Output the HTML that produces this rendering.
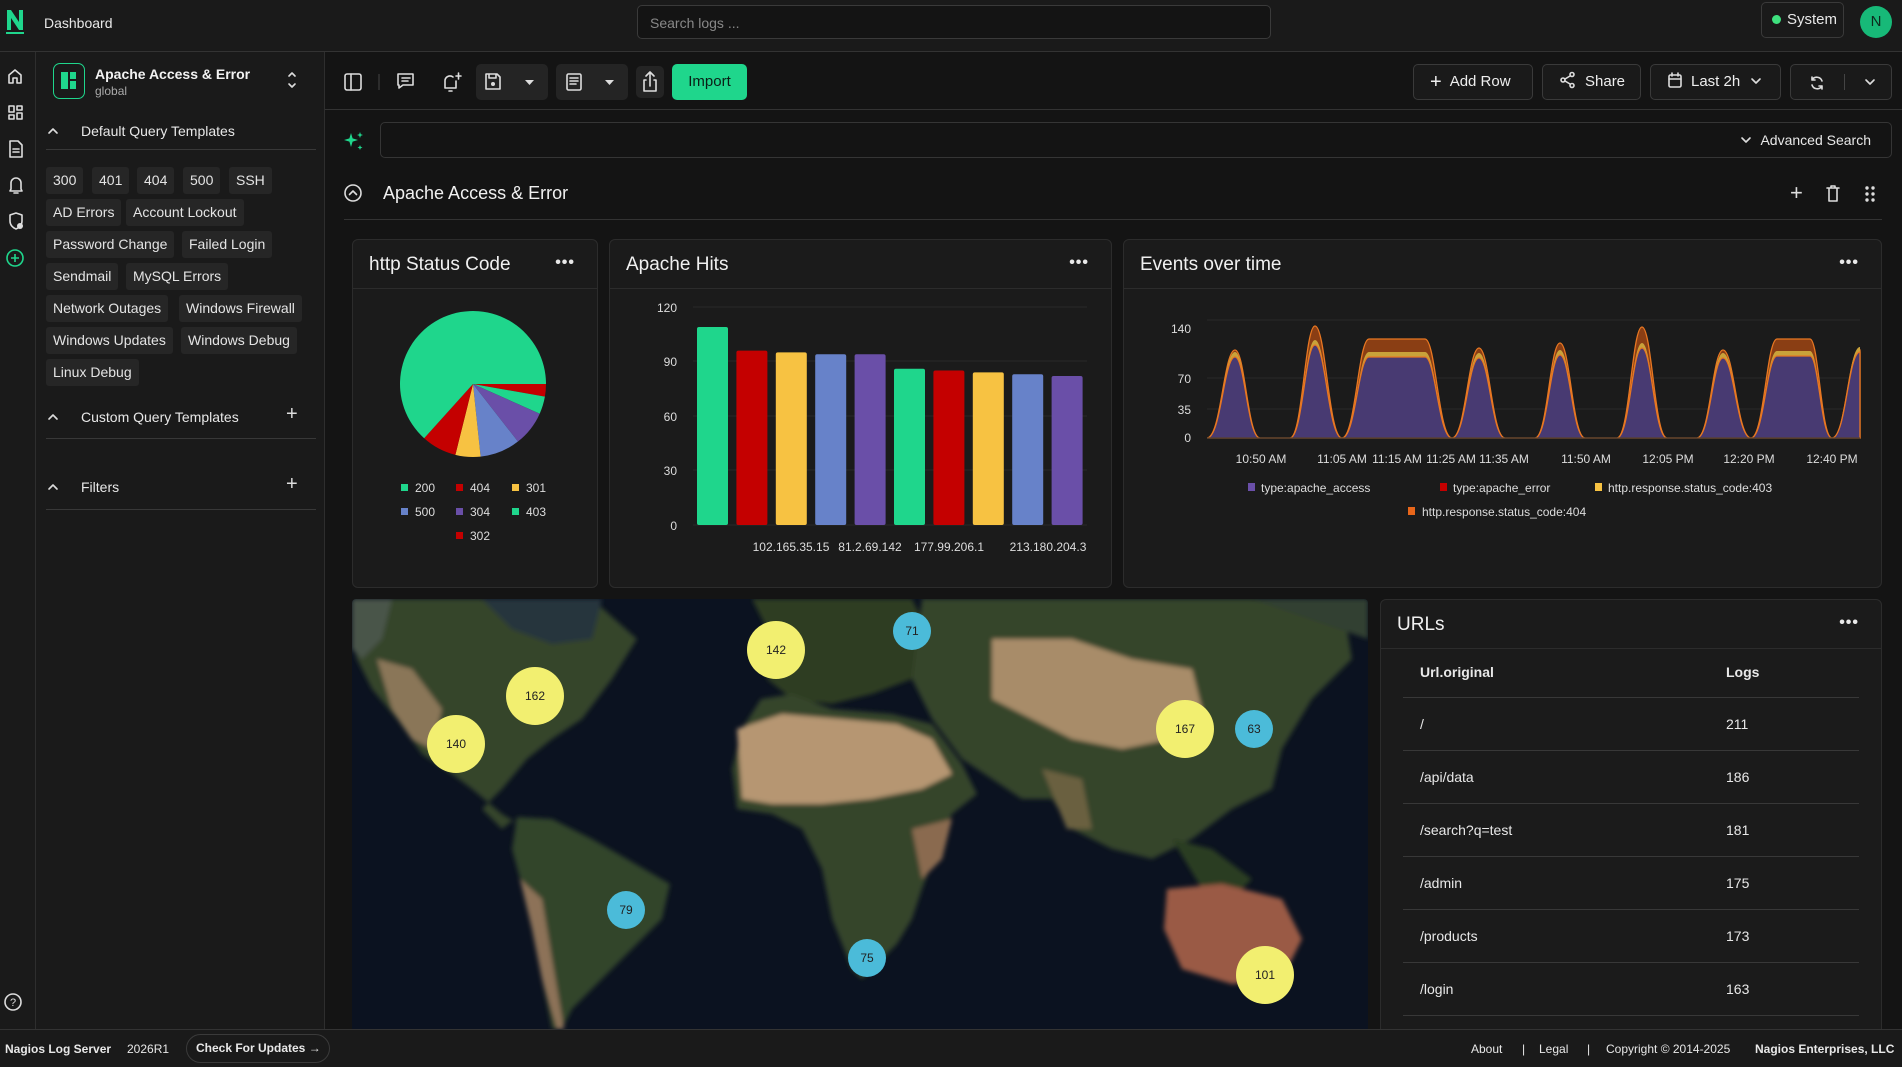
<!DOCTYPE html>
<html><head><meta charset="utf-8">
<style>
*{box-sizing:border-box;margin:0;padding:0}
html,body{width:1902px;height:1067px;overflow:hidden}
body{background:#141414;font-family:"Liberation Sans",sans-serif;color:#e8e8e8;position:relative}
.a{position:absolute}
.top{left:0;top:0;width:1902px;height:52px;background:#1a1a1a;border-bottom:1px solid #333}
.rail{left:0;top:52px;width:36px;height:977px;background:#1a1a1a;border-right:1px solid #2e2e2e}
.side{left:36px;top:52px;width:289px;height:977px;background:#1a1a1a;border-right:1px solid #2e2e2e}
.chip{position:absolute;height:27px;background:#262626;border-radius:3px;font-size:14px;line-height:27px;padding:0 7px;color:#e4e4e4;white-space:nowrap}
.panel{position:absolute;background:#1b1b1b;border:1px solid #2c2c2c;border-radius:6px;overflow:hidden}
.ph{position:absolute;left:0;top:0;right:0;height:49px;border-bottom:1px solid #2c2c2c}
.pt{position:absolute;left:16px;top:14px;font-size:19px;color:#f0f0f0}
.dots{position:absolute;right:22px;top:14px;font-size:16px;letter-spacing:1px;font-weight:bold}
.btn{position:absolute;top:64px;height:36px;border:1px solid #3a3a3a;border-radius:5px;background:#1a1a1a;font-size:15px;line-height:34px;color:#eee}
.foot{left:0;top:1029px;width:1902px;height:38px;background:#1a1a1a;border-top:1px solid #333;font-size:12px}
.sv{stroke:#ddd;fill:none;stroke-width:1.6;stroke-linecap:round;stroke-linejoin:round}
.lbl{font-size:12px;fill:#ddd;font-family:"Liberation Sans",sans-serif}
.hl{position:absolute;height:1px;background:#383838}
</style></head><body>
<div class="a top">
 <svg class="a" style="left:4px;top:6px" width="22" height="30" viewBox="0 0 22 30"><path d="M3 24V4h4l8 12V4h4v20h-4L7 12v12z" fill="#1fd68c"/><rect x="2" y="26" width="18" height="2" fill="#1fd68c"/></svg>
 <div class="a" style="left:44px;top:15px;font-size:14px">Dashboard</div>
 <div class="a" style="left:637px;top:5px;width:634px;height:34px;border:1px solid #3a3a3a;border-radius:5px;background:#141414;font-size:14px;color:#888;padding:9px 12px">Search logs ...</div>
 <div class="a" style="left:1761px;top:2px;width:83px;height:36px;border:1px solid #3a3a3a;border-radius:5px;font-size:15px;line-height:34px;padding-left:10px"><span style="display:inline-block;width:9px;height:9px;border-radius:50%;background:#3ee07e;margin-right:6px"></span>System</div>
 <div class="a" style="left:1860px;top:6px;width:32px;height:32px;border-radius:50%;background:#17b978;color:#0d2a1d;text-align:center;line-height:32px;font-size:15px">N</div>
</div>
<div class="a rail">
 <svg class="a" style="left:3px;top:14px" width="26" height="220" viewBox="0 0 26 220">
  <path class="sv" d="M6 17V9l6-5 6 5v8h-4v-5h-4v5z"/>
  <g transform="translate(0,36)"><rect class="sv" x="6" y="4" width="5" height="6"/><rect class="sv" x="14" y="4" width="5" height="4"/><rect class="sv" x="6" y="13" width="5" height="4"/><rect class="sv" x="14" y="11" width="5" height="6"/></g>
  <g transform="translate(0,72)"><path class="sv" d="M7 3h8l4 4v12H7z M10 11h6 M10 14h6"/></g>
  <g transform="translate(0,108)"><path class="sv" d="M8 15V9a5 5 0 0 1 10 0v6l1 2H7z M11 19h4"/></g>
  <g transform="translate(0,144)"><path class="sv" d="M13 3l6 2v6c0 4-3 7-6 8-3-1-6-4-6-8V5z"/><circle cx="17" cy="16" r="3" fill="#ddd"/></g>
  <g transform="translate(0,180)"><circle cx="12" cy="12" r="8" stroke="#1fd68c" stroke-width="1.6" fill="none"/><path d="M12 8v8M8 12h8" stroke="#1fd68c" stroke-width="1.6"/></g>
 </svg>
 <svg class="a" style="left:3px;top:938px" width="26" height="26"><circle cx="10" cy="12" r="8" class="sv"/><text x="10" y="16" text-anchor="middle" font-size="11" fill="#ddd">?</text></svg>
</div>
<div class="a side">
 <div class="a" style="left:17px;top:11px;width:32px;height:36px;border:1.5px solid #1fd68c;border-radius:7px"><div class="a" style="left:7px;top:8px;width:7px;height:17px;background:#1fd68c"></div><div class="a" style="left:16px;top:8px;width:6px;height:7px;background:#1fd68c"></div><div class="a" style="left:16px;top:17px;width:6px;height:8px;background:#1fd68c"></div></div>
 <div class="a" style="left:59px;top:14px;font-size:14px;font-weight:bold;color:#f2f2f2">Apache Access &amp; Error</div>
 <div class="a" style="left:59px;top:32px;font-size:12px;color:#aaa">global</div>
 <svg class="a" style="left:250px;top:18px" width="12" height="20"><path class="sv" d="M3 6l3-3 3 3 M3 14l3 3 3-3"/></svg>
 <svg class="a" style="left:10px;top:73px" width="14" height="12"><path class="sv" d="M3 8l4-4 4 4"/></svg>
 <div class="a" style="left:45px;top:71px;font-size:14px">Default Query Templates</div>
 <div class="hl" style="left:10px;top:97px;width:270px"></div>
 <div class="chip" style="left:10px;top:115px">300</div><div class="chip" style="left:56px;top:115px">401</div><div class="chip" style="left:101px;top:115px">404</div><div class="chip" style="left:147px;top:115px">500</div><div class="chip" style="left:193px;top:115px">SSH</div>
 <div class="chip" style="left:10px;top:147px">AD Errors</div><div class="chip" style="left:90px;top:147px">Account Lockout</div>
 <div class="chip" style="left:10px;top:179px">Password Change</div><div class="chip" style="left:146px;top:179px">Failed Login</div>
 <div class="chip" style="left:10px;top:211px">Sendmail</div><div class="chip" style="left:90px;top:211px">MySQL Errors</div>
 <div class="chip" style="left:10px;top:243px">Network Outages</div><div class="chip" style="left:143px;top:243px">Windows Firewall</div>
 <div class="chip" style="left:10px;top:275px">Windows Updates</div><div class="chip" style="left:145px;top:275px">Windows Debug</div>
 <div class="chip" style="left:10px;top:307px">Linux Debug</div>
 <svg class="a" style="left:10px;top:359px" width="14" height="12"><path class="sv" d="M3 8l4-4 4 4"/></svg>
 <div class="a" style="left:45px;top:357px;font-size:14px">Custom Query Templates</div>
 <div class="a" style="left:250px;top:351px;font-size:20px;color:#ddd">+</div>
 <div class="hl" style="left:10px;top:386px;width:270px"></div>
 <svg class="a" style="left:10px;top:429px" width="14" height="12"><path class="sv" d="M3 8l4-4 4 4"/></svg>
 <div class="a" style="left:45px;top:427px;font-size:14px">Filters</div>
 <div class="a" style="left:250px;top:421px;font-size:20px;color:#ddd">+</div>
 <div class="hl" style="left:10px;top:457px;width:270px"></div>
</div>
<div class="a" style="left:325px;top:52px;width:1577px;height:58px;border-bottom:1px solid #333"></div>
<svg class="a" style="left:340px;top:64px" width="330" height="36" viewBox="340 64 330 36">
 <rect x="345" y="74" width="16" height="16" rx="2" class="sv"/><path class="sv" d="M351 74v16"/>
 <path d="M379 74v16" stroke="#444"/>
 <path class="sv" d="M398 74h15v11h-10l-4 3v-3h-1z M402 78h8 M402 81h6"/>
 <path class="sv" d="M445 88v-7a5 5 0 0 1 8-4 M445 88h11 M449 91h3 M456 76h5 M458.5 73v6 M456 81v7"/>
 <rect x="476" y="64" width="72" height="36" rx="5" fill="#242424"/>
 <path class="sv" d="M486 74h11l3 3v12h-14z M489 74v4h7v-4"/><circle cx="493" cy="84" r="2" fill="#ddd"/>
 <path d="M525 80h9l-4.5 5z" fill="#ddd"/>
 <rect x="556" y="64" width="72" height="36" rx="5" fill="#242424"/>
 <rect x="567" y="74" width="14" height="16" rx="1.5" class="sv"/><path class="sv" d="M570 78h8 M570 81h8 M570 84h6"/>
 <path d="M605 80h9l-4.5 5z" fill="#ddd"/>
 <rect x="636" y="66" width="28" height="32" rx="5" fill="#242424"/>
 <path class="sv" d="M646 80h-2v11h12V80h-2 M650 86V72 M646 76l4-4 4 4"/>
</svg>
<div class="a" style="left:672px;top:64px;width:75px;height:36px;background:#1fd68c;border-radius:5px;color:#0b1f16;font-size:15px;text-align:center;line-height:36px">Import</div>
<div class="btn" style="left:1413px;width:120px;padding-left:16px"><span style="font-size:20px;vertical-align:-2px;margin-right:8px">+</span>Add Row</div>
<div class="btn" style="left:1542px;width:99px;padding-left:16px"><svg width="18" height="18" style="vertical-align:-3px;margin-right:8px"><circle cx="13" cy="3.5" r="2" class="sv"/><circle cx="4" cy="9" r="2" class="sv"/><circle cx="13" cy="14.5" r="2" class="sv"/><path class="sv" d="M6 8l5-3 M6 10l5 3"/></svg>Share</div>
<div class="btn" style="left:1650px;width:131px;padding-left:16px"><svg width="16" height="16" style="vertical-align:-2px;margin-right:8px"><rect x="2" y="3" width="12" height="12" rx="1.5" class="sv"/><path class="sv" d="M2 7h12 M5 1v3 M11 1v3"/></svg>Last 2h <svg width="12" height="10" style="margin-left:6px"><path class="sv" d="M2 3l4 4 4-4"/></svg></div>
<div class="btn" style="left:1790px;width:102px"><svg class="a" style="left:17px;top:9px" width="18" height="18"><path class="sv" d="M14 7a5.5 5.5 0 0 0-10-1 M4 11a5.5 5.5 0 0 0 10 1 M4 3v3h3 M14 15v-3h-3"/></svg><div class="a" style="left:53px;top:9px;width:1px;height:16px;background:#444"></div><svg class="a" style="left:72px;top:12px" width="14" height="10"><path class="sv" d="M3 3l4 4 4-4"/></svg></div>
<svg class="a" style="left:342px;top:130px" width="24" height="24"><path d="M9 3l1.6 5.4L16 10l-5.4 1.6L9 17l-1.6-5.4L2 10l5.4-1.6z" fill="#1fd68c"/><path d="M18 2l.8 2.2L21 5l-2.2.8L18 8l-.8-2.2L15 5l2.2-.8z" fill="#1fd68c"/><path d="M18 15l.7 1.8 1.8.7-1.8.7L18 20l-.7-1.8-1.8-.7 1.8-.7z" fill="#1fd68c"/></svg>
<div class="a" style="left:380px;top:122px;width:1512px;height:36px;border:1px solid #353535;border-radius:5px;background:#141414"><div class="a" style="right:20px;top:9px;font-size:14px"><svg width="12" height="10" style="margin-right:8px"><path class="sv" d="M2 3l4 4 4-4"/></svg>Advanced Search</div></div>
<svg class="a" style="left:343px;top:183px" width="20" height="20"><circle cx="10" cy="10" r="8" class="sv"/><path class="sv" d="M6.5 11.5L10 8l3.5 3.5"/></svg>
<div class="a" style="left:383px;top:183px;font-size:18px;color:#f0f0f0">Apache Access &amp; Error</div>
<div class="a" style="left:1790px;top:180px;font-size:22px;color:#ddd">+</div>
<svg class="a" style="left:1825px;top:185px" width="16" height="18"><path class="sv" d="M2 3h12 M6 3V1h4v2 M4 3v13h8V3"/></svg>
<svg class="a" style="left:1863px;top:185px" width="14" height="18" fill="#ddd"><circle cx="4" cy="3" r="1.7"/><circle cx="10" cy="3" r="1.7"/><circle cx="4" cy="9" r="1.7"/><circle cx="10" cy="9" r="1.7"/><circle cx="4" cy="15" r="1.7"/><circle cx="10" cy="15" r="1.7"/></svg>
<div class="hl" style="left:344px;top:219px;width:1538px;background:#333"></div>
<div class="panel" style="left:352px;top:239px;width:246px;height:349px"><div class="ph"><div class="pt">http Status Code</div><div class="dots">•••</div></div></div>
<div class="panel" style="left:609px;top:239px;width:503px;height:349px"><div class="ph"><div class="pt">Apache Hits</div><div class="dots">•••</div></div></div>
<div class="panel" style="left:1123px;top:239px;width:759px;height:349px"><div class="ph"><div class="pt">Events over time</div><div class="dots">•••</div></div></div>
<div class="panel" style="left:1380px;top:599px;width:502px;height:460px"><div class="ph"><div class="pt">URLs</div><div class="dots">•••</div></div></div>
<svg class="a" style="left:0;top:0" width="1902" height="1067" viewBox="0 0 1902 1067">
 <g id="pie"></g>
 <g class="lbl">
  <rect x="401" y="484" width="7" height="7" fill="#1fd68c"/><text x="415" y="492">200</text>
  <rect x="456" y="484" width="7" height="7" fill="#c40000"/><text x="470" y="492">404</text>
  <rect x="512" y="484" width="7" height="7" fill="#f7c242"/><text x="526" y="492">301</text>
  <rect x="401" y="508" width="7" height="7" fill="#6782c9"/><text x="415" y="516">500</text>
  <rect x="456" y="508" width="7" height="7" fill="#6a4fa8"/><text x="470" y="516">304</text>
  <rect x="512" y="508" width="7" height="7" fill="#1fd68c"/><text x="526" y="516">403</text>
  <rect x="456" y="532" width="7" height="7" fill="#c40000"/><text x="470" y="540">302</text>
 </g>
 <g stroke="#2a2a2a"><path d="M693 307H1087M693 361H1087M693 416H1087M693 470H1087M693 525H1087"/></g>
 <g class="lbl" text-anchor="end"><text x="677" y="312">120</text><text x="677" y="366">90</text><text x="677" y="421">60</text><text x="677" y="475">30</text><text x="677" y="530">0</text></g>
 <g id="bars"></g>
 <g class="lbl" text-anchor="middle"><text x="791" y="551">102.165.35.15</text><text x="870" y="551">81.2.69.142</text><text x="949" y="551">177.99.206.1</text><text x="1048" y="551">213.180.204.3</text></g>
 <g stroke="#2a2a2a"><path d="M1207 320H1860M1207 378H1860M1207 409H1860"/></g>
 <g class="lbl" text-anchor="end"><text x="1191" y="333">140</text><text x="1191" y="383">70</text><text x="1191" y="414">35</text><text x="1191" y="442">0</text></g>
 <path id="eo" fill="#8a3e14" stroke="#e87722" stroke-width="1.3"/>
 <path id="ey" fill="#c9a23a"/>
 <path id="ep" fill="#483a72" stroke="#e87722" stroke-width="1.3"/>
 <path d="M1207 438H1860" stroke="#333"/>
 <g class="lbl" text-anchor="middle"><text x="1261" y="463">10:50 AM</text><text x="1342" y="463">11:05 AM</text><text x="1397" y="463">11:15 AM</text><text x="1451" y="463">11:25 AM</text><text x="1504" y="463">11:35 AM</text><text x="1586" y="463">11:50 AM</text><text x="1668" y="463">12:05 PM</text><text x="1749" y="463">12:20 PM</text><text x="1832" y="463">12:40 PM</text></g>
 <g class="lbl">
  <rect x="1248" y="483" width="7" height="8" fill="#6a4fa8"/><text x="1261" y="492">type:apache_access</text>
  <rect x="1440" y="483" width="7" height="8" fill="#c40000"/><text x="1453" y="492">type:apache_error</text>
  <rect x="1595" y="483" width="7" height="8" fill="#f7c242"/><text x="1608" y="492">http.response.status_code:403</text>
  <rect x="1408" y="507" width="7" height="8" fill="#e8661a"/><text x="1422" y="516">http.response.status_code:404</text>
 </g>
</svg>
<div class="a" style="left:352px;top:599px;width:1016px;height:430px;overflow:hidden;background:#0b1220;border-radius:4px 4px 0 0">
<svg width="1016" height="430" viewBox="0 0 1016 430">
 <defs><filter id="bl"><feGaussianBlur stdDeviation="2.5"/></filter></defs>
 <g filter="url(#bl)">
 <path d="M0 0H240L285 40 260 80 230 120 200 140 175 160 150 190 130 210 150 230 160 222 175 230 150 215 120 190 100 175 70 155 45 120 20 90 5 60 0 40z" fill="#34442a"/>
 <path d="M25 60L60 70 90 110 80 150 60 140 40 110z" fill="#8a7658"/>
 <path d="M130 0H250L240 40 200 45 160 30z" fill="#26363e"/>
 <path d="M165 218L200 220 240 240 275 260 318 285 310 320 280 350 250 380 220 410 210 430 200 430 190 380 180 330 168 280 160 250z" fill="#33442a"/>
 <path d="M168 280L180 330 190 380 205 430 212 430 200 360 190 300z" fill="#8d7258"/>
 <path d="M400 0H560L580 40 560 80 520 95 480 105 440 100 415 80 420 40z" fill="#2e3d24"/>
 <path d="M409 100L440 95 480 110 540 115 580 125 610 165 625 195 600 215 585 250 570 290 560 320 545 345 510 380 500 370 480 320 470 270 450 230 420 215 385 210 380 170 390 130z" fill="#34442a"/>
 <path d="M385 130L430 115 490 120 545 125 580 140 600 175 570 190 520 200 470 205 420 205 390 200z" fill="#b69672"/>
 <path d="M560 230L600 220 590 260 570 280z" fill="#8a6a50"/>
 <path d="M570 0H990L1000 60 960 100 930 150 920 190 880 210 840 240 800 260 760 250 720 230 700 200 670 200 640 180 610 160 580 120 560 80z" fill="#34442a"/>
 <path d="M640 40L720 40 780 60 840 70 850 110 820 140 770 150 720 140 680 120 640 100z" fill="#a88c69"/>
 <path d="M690 170L730 180 740 230 715 230z" fill="#6a6040"/>
 <path d="M820 240L860 250 900 280 880 300 850 290z" fill="#2c3d22"/>
 <path d="M815 290L870 285 930 300 950 340 930 380 880 385 830 370 812 330z" fill="#9a5a44"/>
 <path d="M900 0H1016V30 980 60 940 40z" fill="#334030"/>
 <path d="M0 0 40 0 30 40 10 60 0 50z" fill="#4a5548"/>
 </g>
 <g font-family="Liberation Sans,sans-serif" font-size="12" fill="#222" text-anchor="middle">
  <circle cx="104" cy="145" r="29" fill="#f2ef70"/><text x="104" y="149">140</text>
  <circle cx="183" cy="97" r="29" fill="#f2ef70"/><text x="183" y="101">162</text>
  <circle cx="424" cy="51" r="29" fill="#f2ef70"/><text x="424" y="55">142</text>
  <circle cx="560" cy="32" r="19" fill="#4bbbd9"/><text x="560" y="36">71</text>
  <circle cx="833" cy="130" r="29" fill="#f2ef70"/><text x="833" y="134">167</text>
  <circle cx="902" cy="130" r="19" fill="#4bbbd9"/><text x="902" y="134">63</text>
  <circle cx="274" cy="311" r="19" fill="#4bbbd9"/><text x="274" y="315">79</text>
  <circle cx="515" cy="359" r="19" fill="#4bbbd9"/><text x="515" y="363">75</text>
  <circle cx="913" cy="376" r="29" fill="#f2ef70"/><text x="913" y="380">101</text>
 </g>
</svg></div>
<div class="a" style="left:1403px;top:599px;width:456px;height:428px;overflow:hidden;font-size:14px">
 <div class="a" style="left:17px;top:65px;font-weight:bold">Url.original</div><div class="a" style="left:323px;top:65px;font-weight:bold">Logs</div>
 <div class="hl" style="left:0;top:98px;width:456px"></div>
 <div class="a" style="left:17px;top:117px">/</div><div class="a" style="left:323px;top:117px">211</div>
 <div class="hl" style="left:0;top:151px;width:456px"></div>
 <div class="a" style="left:17px;top:170px">/api/data</div><div class="a" style="left:323px;top:170px">186</div>
 <div class="hl" style="left:0;top:204px;width:456px"></div>
 <div class="a" style="left:17px;top:223px">/search?q=test</div><div class="a" style="left:323px;top:223px">181</div>
 <div class="hl" style="left:0;top:257px;width:456px"></div>
 <div class="a" style="left:17px;top:276px">/admin</div><div class="a" style="left:323px;top:276px">175</div>
 <div class="hl" style="left:0;top:310px;width:456px"></div>
 <div class="a" style="left:17px;top:329px">/products</div><div class="a" style="left:323px;top:329px">173</div>
 <div class="hl" style="left:0;top:363px;width:456px"></div>
 <div class="a" style="left:17px;top:382px">/login</div><div class="a" style="left:323px;top:382px">163</div>
 <div class="hl" style="left:0;top:416px;width:456px"></div>
</div>
<div class="a foot">
 <div class="a" style="left:5px;top:12px;font-weight:bold">Nagios Log Server</div>
 <div class="a" style="left:127px;top:12px">2026R1</div>
 <div class="a" style="left:186px;top:4px;width:144px;height:29px;border:1px solid #3a3a3a;border-radius:15px;font-weight:bold;line-height:27px;padding-left:9px">Check For Updates →</div>
 <div class="a" style="left:1471px;top:12px">About</div>
 <div class="a" style="left:1522px;top:12px">|</div>
 <div class="a" style="left:1539px;top:12px">Legal</div>
 <div class="a" style="left:1587px;top:12px">|</div>
 <div class="a" style="left:1606px;top:12px">Copyright © 2014-2025</div>
 <div class="a" style="left:1755px;top:12px;font-weight:bold">Nagios Enterprises, LLC</div>
</div>
<script>
(function(){
var ns="http://www.w3.org/2000/svg";
var cx=473,cy=384,r=73,sl=[[0,10,"#c40000"],[10,24,"#1fd68c"],[24,52,"#6a4fa8"],[52,84,"#6782c9"],[84,104,"#f7c242"],[104,132,"#c40000"],[132,360,"#1fd68c"]];
var g=document.getElementById("pie");
sl.forEach(function(s){var a0=s[0]*Math.PI/180,a1=s[1]*Math.PI/180;var p=document.createElementNS(ns,"path");
p.setAttribute("d","M"+cx+" "+cy+"L"+(cx+r*Math.cos(a0))+" "+(cy+r*Math.sin(a0))+"A"+r+" "+r+" 0 "+((s[1]-s[0])>180?1:0)+" 1 "+(cx+r*Math.cos(a1))+" "+(cy+r*Math.sin(a1))+"Z");p.setAttribute("fill",s[2]);g.appendChild(p);});
var v=[109,96,95,94,94,86,85,84,83,82],c=["#1fd68c","#c40000","#f7c242","#6782c9","#6a4fa8","#1fd68c","#c40000","#f7c242","#6782c9","#6a4fa8"],b=document.getElementById("bars");
v.forEach(function(x,i){var h=x*1.817;var re=document.createElementNS(ns,"rect");re.setAttribute("x",697+i*39.4);re.setAttribute("y",525-h);re.setAttribute("width",31);re.setAttribute("height",h);re.setAttribute("rx",2);re.setAttribute("fill",c[i]);b.appendChild(re);});
var P=[[1207,1235,1235,1260,357,350],[1290,1315,1315,1342,345,326],[1342,1369,1425,1452,357,339],[1452,1479,1479,1505,358,348],[1535,1560,1560,1585,355,343],[1617,1642,1642,1667,348,327],[1697,1723,1723,1751,358,350],[1751,1777,1810,1832,356,339]];
function mk(k,off){var d="M1207 438";P.forEach(function(q){var top=q[k]+off;var w1=q[1]-q[0],w2=q[3]-q[2];d+="L"+q[0]+" 438C"+(q[0]+w1*.5)+" 438 "+(q[1]-w1*.4)+" "+top+" "+q[1]+" "+top+"L"+q[2]+" "+top+"C"+(q[2]+w2*.4)+" "+top+" "+(q[3]-w2*.5)+" 438 "+q[3]+" 438";});
var t=(k==5?350:(k==4?352+off:352));d+="L1832 438C1846 438 1848 "+t+" 1860 "+t+"L1860 438Z";return d;}
document.getElementById("eo").setAttribute("d",mk(5,0));
document.getElementById("ey").setAttribute("d",mk(4,-5));
document.getElementById("ep").setAttribute("d",mk(4,0));
})();
</script>
</body></html>
